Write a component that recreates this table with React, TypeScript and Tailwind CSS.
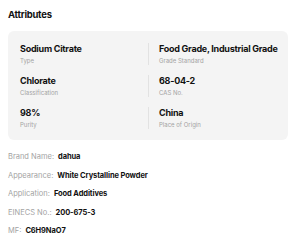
const attrs = [
  { value: "Sodium Citrate", label: "Type" },
  { value: "Food Grade, Industrial Grade", label: "Grade Standard" },
  { value: "Chlorate", label: "Classification" },
  { value: "68-04-2", label: "CAS No." },
  { value: "98%", label: "Purity" },
  { value: "China", label: "Place of Origin" },
];

const details = [
  { label: "Brand Name:", value: "dahua" },
  { label: "Appearance:", value: "White Crystalline Powder" },
  { label: "Application:", value: "Food Additives" },
  { label: "EINECS No.:", value: "200-675-3" },
  { label: "MF:", value: "C6H9NaO7" },
];

export default function App() {
  return (
    <div className="w-[300px] h-[240px] bg-white pl-2 pr-3 pt-[9px] font-['Inter',sans-serif] text-[#111]">
      <h2 className="text-[9.5px] font-bold leading-[12px] tracking-[-0.25px]">Attributes</h2>
      <div className="mt-[10px] rounded-md bg-[#f4f4f4] px-3 pt-[12px] pb-[11px] grid grid-cols-2 gap-y-[10px]">
        {attrs.map((a, i) => (
          <div
            key={a.label}
            className={i % 2 === 1 ? "border-l border-[#e2e2e2] pl-[10px]" : "pr-2"}
          >
            <p className="text-[9px] font-bold leading-[12px] tracking-[-0.25px] whitespace-nowrap">{a.value}</p>
            <p className="mt-[2px] text-[6px] leading-[8px] text-[#a3a3a3]">{a.label}</p>
          </div>
        ))}
      </div>
      <div className="mt-[12px] flex flex-col gap-[8px]">
        {details.map((d) => (
          <div key={d.label} className="flex items-center gap-[4px] text-[7.5px] leading-[10.5px]">
            <span className="text-[#a3a3a3]">{d.label}</span>
            <span className="font-bold tracking-[-0.1px]">{d.value}</span>
          </div>
        ))}
      </div>
    </div>
  );
}
